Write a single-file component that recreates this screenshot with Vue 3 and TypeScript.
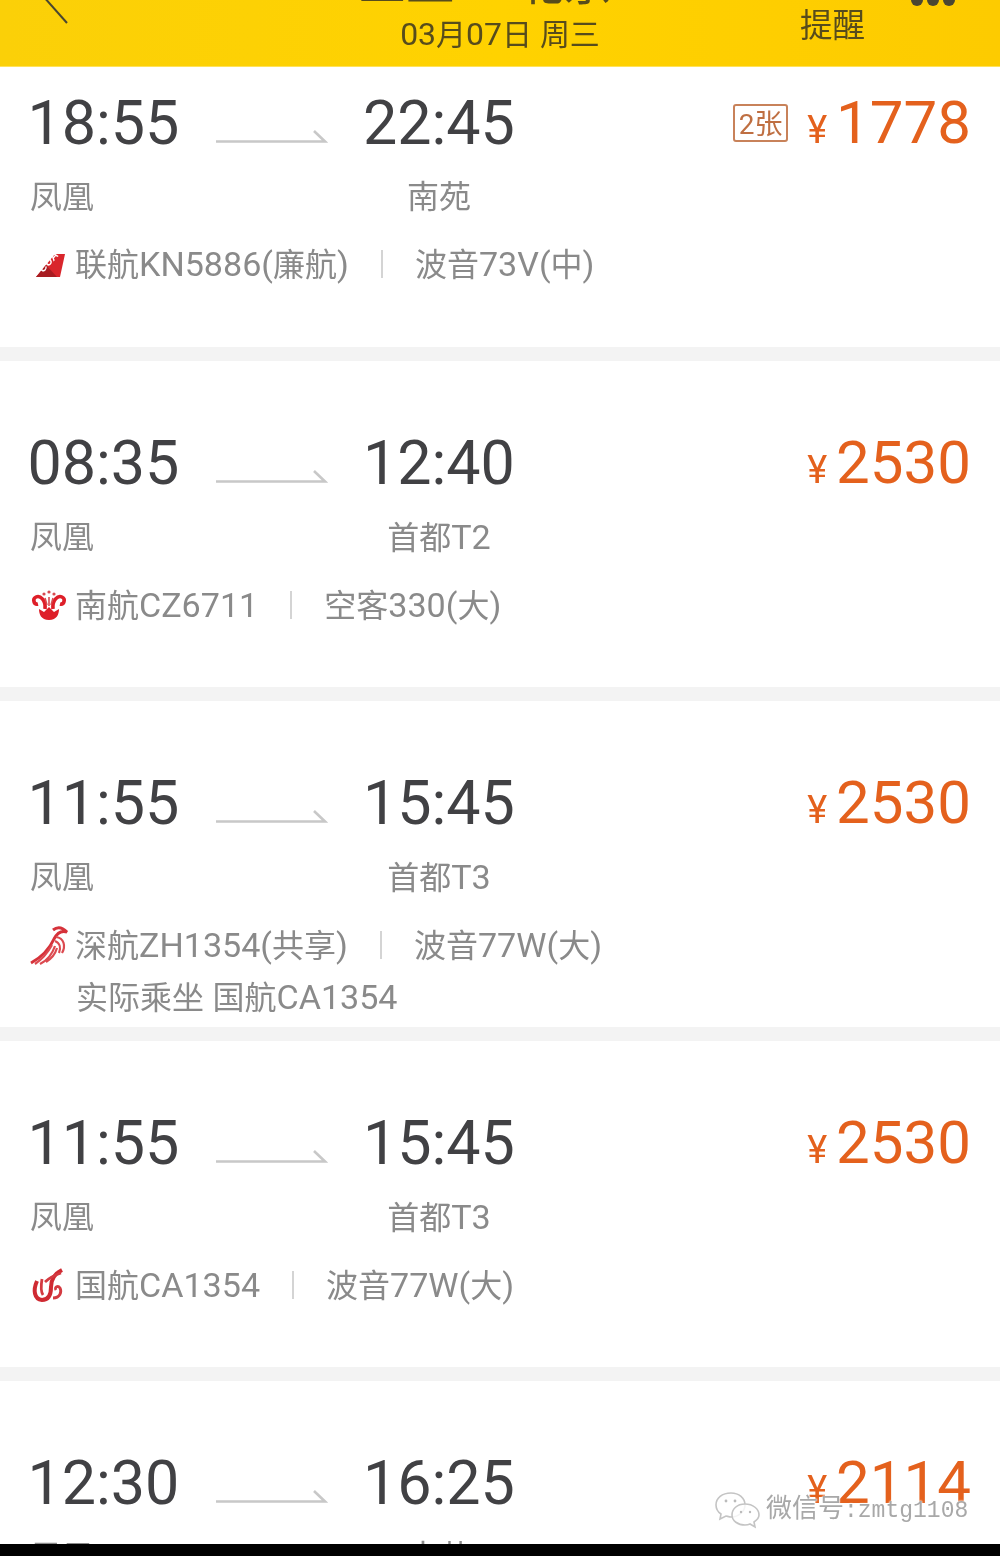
<script setup lang="ts">
interface Flight {
  dep: string
  arr: string
  from: string
  to: string
  price: string
  logo: 'kn' | 'cz' | 'zh' | 'ca'
  name: string
  plane: string
  shared?: string
  tickets?: string
}

const flights: Flight[] = [
  { dep: '18:55', arr: '22:45', from: '凤凰', to: '南苑', price: '1778', logo: 'kn', name: '联航KN5886(廉航)', plane: '波音73V(中)', tickets: '2张' },
  { dep: '08:35', arr: '12:40', from: '凤凰', to: '首都T2', price: '2530', logo: 'cz', name: '南航CZ6711', plane: '空客330(大)' },
  { dep: '11:55', arr: '15:45', from: '凤凰', to: '首都T3', price: '2530', logo: 'zh', name: '深航ZH1354(共享)', plane: '波音77W(大)', shared: '实际乘坐 国航CA1354' },
  { dep: '11:55', arr: '15:45', from: '凤凰', to: '首都T3', price: '2530', logo: 'ca', name: '国航CA1354', plane: '波音77W(大)' },
  { dep: '12:30', arr: '16:25', from: '凤凰', to: '南苑', price: '2114', logo: 'ca', name: '国航CA1354', plane: '波音77W(大)' },
]

// latin runs are set a bit larger than the CJK around them
const runs = (s: string) =>
  s.split(/([\x20-\x7e]+)/).filter(Boolean).map((t) => ({ t, latin: /^[\x20-\x7e]/.test(t) }))
</script>

<template>
  <div class="screen">
    <div class="page">
      <header class="topbar">
        <svg class="back" width="40" height="30" viewBox="0 0 40 30">
          <path d="M13 -4 L37 23" fill="none" stroke="#4a4630" stroke-width="2" />
        </svg>
        <div class="route">
          <div class="route-title">三亚 — 北京</div>
          <div class="route-date">
            <span v-for="(r, k) in runs('03月07日 周三')" :key="k" :class="{ latin: r.latin }">{{ r.t }}</span>
          </div>
        </div>
        <div class="remind">提醒</div>
        <div class="dots"><i></i><i></i><i></i></div>
      </header>

      <section v-for="(f, i) in flights" :key="i" class="card">
        <div class="times">
          <div class="time dep">{{ f.dep }}</div>
          <svg class="arrow" width="112" height="16" viewBox="0 0 112 16">
            <path d="M0 13.5 H109 L98 3" fill="none" stroke="#c8c8c8" stroke-width="2.6" />
          </svg>
          <div class="time">{{ f.arr }}</div>
          <div class="price">
            <span v-if="f.tickets" class="tickets">{{ f.tickets }}</span>
            <span class="yen">¥</span>
            <span class="amount">{{ f.price }}</span>
          </div>
          <div class="station">{{ f.from }}</div>
          <div></div>
          <div class="station center">
            <span v-for="(r, k) in runs(f.to)" :key="k" :class="{ latin: r.latin }">{{ r.t }}</span>
          </div>
        </div>

        <div class="info">
          <svg class="logo" width="40" height="40" viewBox="0 0 40 40">
            <template v-if="f.logo === 'kn'">
              <path d="M7 33 L26 10 H36 L31 33 Z" fill="#d9262c" />
              <path d="M7 33 L17 21 L28 33 Z" fill="#a81d22" />
              <text x="14" y="29" class="logo-mark" transform="rotate(-48 14 29)">CUA</text>
            </template>
            <template v-else-if="f.logo === 'cz'">
              <path d="M20 35 C12 35 10 29 10 24 L15 27 L20 22 L25 27 L30 24 C30 29 28 35 20 35 Z" fill="#de1f29" />
              <path d="M16 24 C17 15 11 10 7 12 C3 14 5 20 9 19 M24 24 C23 15 29 10 33 12 C37 14 35 20 31 19" fill="none" stroke="#de1f29" stroke-width="3.6" />
              <path d="M20 21 V12 M16 13 L18 20 M24 13 L22 20" fill="none" stroke="#d84a50" stroke-width="1.6" />
              <circle cx="20" cy="7" r="1.6" fill="#d84a50" />
              <circle cx="15" cy="9" r="1.6" fill="#d84a50" />
              <circle cx="25" cy="9" r="1.6" fill="#d84a50" />
            </template>
            <template v-else-if="f.logo === 'zh'">
              <path d="M24 5 C29 1 34 3 38 7 C32 5 28 8 25 14 C20 25 11 33 2 38" fill="none" stroke="#d6323a" stroke-width="3" />
              <path d="M27 12 C35 13 37 21 33 28 M26 16 C31 18 32 23 30 28 M23 20 C18 29 12 35 6 39 M26 21 C23 30 17 36 11 39 M28 23 C26 30 22 34 17 37" fill="none" stroke="#dc4a50" stroke-width="2.2" />
            </template>
            <template v-else>
              <path d="M8 16 C4 25 5 34 13 35 C20 35 22 29 22 22 C22 15 25 9 33 5" fill="none" stroke="#cf2a32" stroke-width="4" />
              <path d="M13 14 C12 20 12 27 14 30 M16 17 C20 13 26 10 32 8 M24 33 C31 33 33 27 31 23 C29 20 25 22 27 25" fill="none" stroke="#d43a41" stroke-width="2.8" />
            </template>
          </svg>
          <span class="info-text">
            <span v-for="(r, k) in runs(f.name)" :key="k" :class="{ latin: r.latin }">{{ r.t }}</span>
          </span>
          <span class="divider"></span>
          <span class="info-text">
            <span v-for="(r, k) in runs(f.plane)" :key="k" :class="{ latin: r.latin }">{{ r.t }}</span>
          </span>
        </div>
        <div v-if="f.shared" class="shared">
          <span v-for="(r, k) in runs(f.shared)" :key="k" :class="{ latin: r.latin }">{{ r.t }}</span>
        </div>
      </section>

      <div class="watermark">
        <svg width="46" height="38" viewBox="0 0 46 38">
          <path d="M17 2 C8 2 2 7 2 14 C2 18 4 21 7 23 L6 28 L12 25 C13 25 15 26 17 26 C25 26 31 20 31 14 C31 7 25 2 17 2 Z" fill="rgba(255,255,255,.8)" stroke="#c4c4c4" stroke-width="1.6" />
          <path d="M31 13 C23 13 18 18 18 24 C18 30 24 34 31 34 C33 34 34 34 36 33 L41 36 L40 31 C43 29 45 27 45 24 C45 18 39 13 31 13 Z" fill="rgba(255,255,255,.8)" stroke="#c4c4c4" stroke-width="1.6" />
          <circle cx="12" cy="10" r="1.4" fill="#bbb" />
          <circle cx="21" cy="10" r="1.4" fill="#bbb" />
          <circle cx="27" cy="21" r="1.2" fill="#bbb" />
          <circle cx="36" cy="21" r="1.2" fill="#bbb" />
        </svg>
        <span>微信号<span class="wm-latin">:zmtg1108</span></span>
      </div>
    </div>
  </div>
</template>

<style>
html,
body {
  margin: 0;
  background: #000;
}
</style>

<style scoped>
.screen {
  width: 1000px;
  height: 1556px;
  background: #000;
  overflow: hidden;
}

.page {
  position: relative;
  height: 1544px;
  overflow: hidden;
  background: #f3f3f3;
  font-family: Roboto, "Noto Sans CJK SC", sans-serif;
  filter: blur(0.6px);
}

.latin {
  font-size: 1.065em;
}

.topbar {
  position: relative;
  height: 67px;
  background: linear-gradient(90deg, #fbd008 0%, #ffd200 50%, #fdcb00 100%);
  box-shadow: inset 0 -1px 0 #ffe25a;
  color: #574c1c;
}

.back {
  position: absolute;
  left: 30px;
  top: 0;
}

.route {
  position: absolute;
  left: 285px;
  right: 315px;
  bottom: 14px;
  text-align: center;
}

.route-title {
  margin-bottom: 7px;
  font-size: 48px;
  line-height: 50px;
}

.route-date {
  margin-left: 30px;
  font-size: 30px;
  line-height: 36px;
  white-space: nowrap;
}

.remind {
  position: absolute;
  left: 800px;
  top: 8px;
  font-size: 32.5px;
  line-height: 36px;
}

.dots {
  position: absolute;
  left: 911px;
  top: -1px;
  display: flex;
  gap: 4px;
}

.dots i {
  width: 12px;
  height: 7px;
  border-radius: 0 0 6px 6px;
  background: #4a4632;
}

.card {
  box-sizing: border-box;
  height: 326px;
  margin-bottom: 14px;
  padding-top: 75px;
  background: #fff;
  overflow: hidden;
}

.card:first-of-type {
  height: 280px;
  padding-top: 29px;
}

.times {
  display: grid;
  grid-template-columns: 150px 112px 150px 1fr;
  column-gap: 36px;
  padding: 0 30px;
  align-items: start;
}

.time {
  margin-left: -1px;
  font-size: 61px;
  line-height: 54px;
  color: #414144;
  white-space: nowrap;
}

.dep {
  margin-left: -2.5px;
}

.arrow {
  align-self: end;
  margin-bottom: 8px;
}

.price {
  display: flex;
  align-items: baseline;
  justify-content: flex-end;
  color: #e4611d;
}

.tickets {
  box-sizing: border-box;
  align-self: flex-start;
  width: 55px;
  height: 38px;
  margin: 8px 19px 0 0;
  border: 2px solid #c8825a;
  border-radius: 3px;
  font-size: 28px;
  line-height: 37px;
  text-align: center;
  color: #bf6f42;
  white-space: nowrap;
}

.yen {
  margin-right: 9px;
  font-size: 38px;
}

.amount {
  font-size: 60px;
  line-height: 54px;
  margin-right: -1px;
}

.station {
  margin-top: 25px;
  font-size: 32px;
  line-height: 40px;
  color: #8a8a8a;
  white-space: nowrap;
}

.center {
  text-align: center;
}

.info {
  display: flex;
  align-items: center;
  height: 40px;
  margin-top: 27px;
  padding-left: 29px;
  font-size: 32px;
  color: #8a8a8a;
}

.logo {
  flex: none;
  margin-right: 6px;
}

.logo-mark {
  font-family: "Liberation Sans", sans-serif;
  font-size: 11px;
  font-style: italic;
  font-weight: 700;
  fill: #fff;
}

.info-text {
  line-height: 40px;
  white-space: nowrap;
}

.divider {
  width: 2px;
  height: 28px;
  margin: 0 32px;
  background: #d4d4d4;
}

.shared {
  margin-top: 12px;
  padding-left: 76px;
  font-size: 32px;
  line-height: 40px;
  color: #8a8a8a;
}

.watermark {
  position: absolute;
  left: 714px;
  top: 1489px;
  display: flex;
  align-items: center;
  gap: 6px;
  font-size: 26px;
  line-height: 38px;
  color: #a8a8a8;
  text-shadow: 0 0 2px #fff, 0 0 2px #fff;
  white-space: nowrap;
}

.wm-latin {
  font-family: "Liberation Mono", monospace;
  font-size: 23px;
}
</style>
